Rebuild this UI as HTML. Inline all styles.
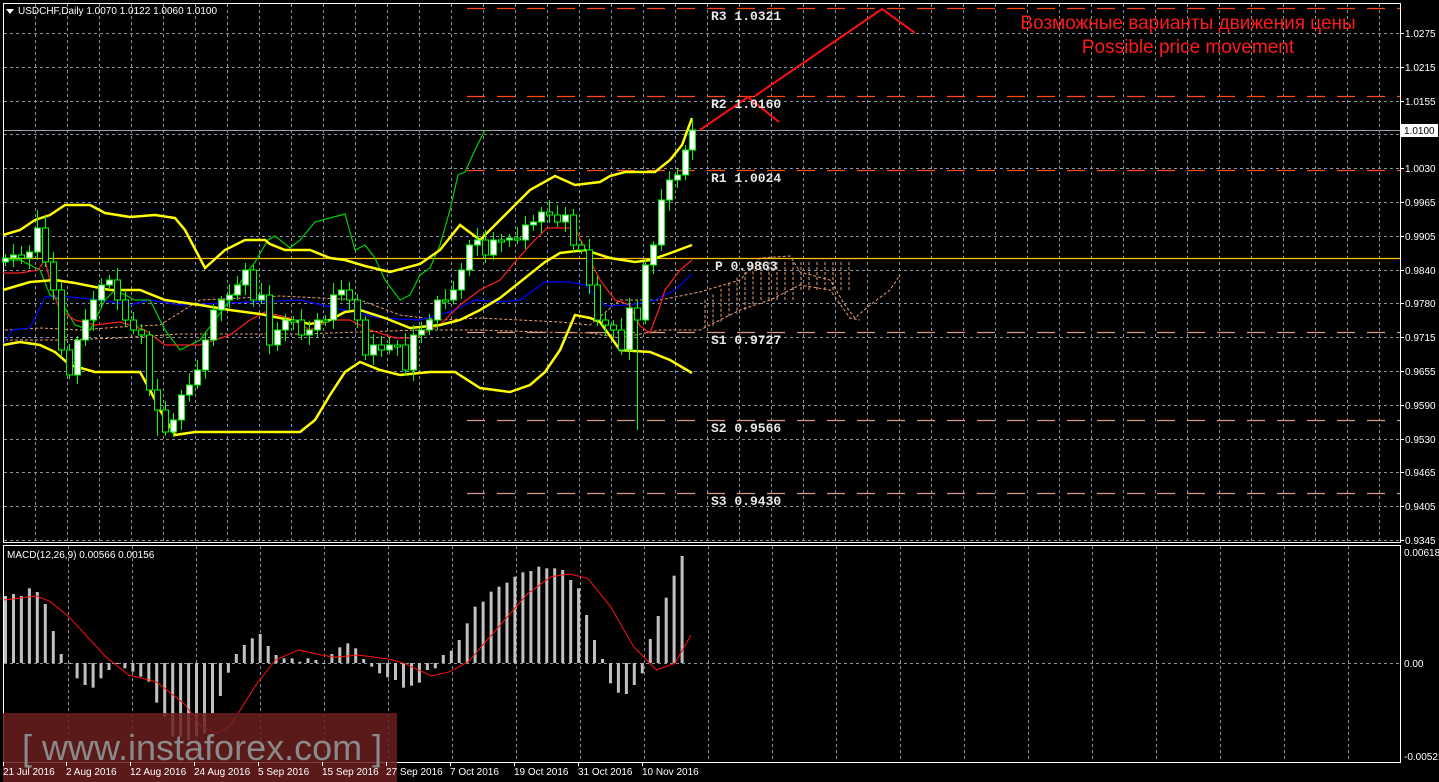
<!DOCTYPE html>
<html><head><meta charset="utf-8"><style>
html,body{margin:0;padding:0;background:#000;width:1439px;height:782px;overflow:hidden}
svg{display:block}
text{font-family:"Liberation Sans","DejaVu Sans",sans-serif}
</style></head><body>
<svg id="s" width="1439" height="782" xmlns="http://www.w3.org/2000/svg">
<rect width="1439" height="782" fill="#000"/>
<g id="grid" stroke="#8794a0" stroke-dasharray="3,3" stroke-width="1"></g>
<rect x="3.5" y="3.5" width="1397" height="539" fill="none" stroke="#fff"/>
<rect x="3.5" y="545.5" width="1397" height="217" fill="none" stroke="#fff"/>
<line x1="4" y1="130.5" x2="1400" y2="130.5" stroke="#9aa0a8"/>
<g stroke-width="1.3" stroke-dasharray="18,12">
<line x1="467" y1="8.5" x2="1400" y2="8.5" stroke="#ff4a10"/>
<line x1="467" y1="96.5" x2="1400" y2="96.5" stroke="#ff4a10"/>
<line x1="467" y1="170.5" x2="1400" y2="170.5" stroke="#ff4a10"/>
<line x1="467" y1="332.5" x2="1400" y2="332.5" stroke="#d89a88"/>
<line x1="467" y1="420.5" x2="1400" y2="420.5" stroke="#d89a88"/>
<line x1="467" y1="493.5" x2="1400" y2="493.5" stroke="#d89a88"/>
</g>
<line x1="4" y1="258.5" x2="1400" y2="258.5" stroke="#ffc000" stroke-width="1.3"/>
<g fill="none" stroke="#e8a070" stroke-dasharray="3,2" stroke-width="1">
<polyline points="5,330 40,328 80,330 120,327 160,325 200,300 240,298 280,296 320,298 360,300 400,315 440,320 480,318 520,320 560,322 590,325 620,300 660,300 700,292 740,280 760,258 790,256 800,272 830,280 845,305 855,318 870,305 890,290 900,275"/>
<polyline points="5,340 60,340 120,338 180,334 240,334 300,334 360,332 420,330 480,330 540,332 590,333 620,338 660,330 700,330 740,310 770,300 800,285 830,290 850,318 860,320"/>
</g>
<g id="hatch" stroke="#e8a070" stroke-dasharray="3,2" stroke-width="1"></g>
<polyline fill="none" stroke="#0000ff" stroke-width="1.2" points="3,345 12,330 30,328 45,297 60,296 100,300 130,305 150,300 180,305 300,300 380,318 420,320 450,312 475,300 500,302 520,300 545,282 570,282 585,285 605,306 630,305 655,300 675,290 692,274"/>
<polyline fill="none" stroke="#00d000" stroke-width="1.2" points="3,260 20,260 40,270 50,295 60,300 75,325 90,330 105,300 115,290 135,300 150,300 165,330 180,350 200,340 215,320 230,300 245,275 255,262 268,240 275,236 290,248 300,240 315,222 330,218 345,214 355,250 365,245 375,258 385,280 400,300 410,295 420,275 430,268 440,245 450,210 458,175 465,172 475,150 485,130"/>
<polyline fill="none" stroke="#ff2020" stroke-width="1.2" points="3,273 20,273 38,270 45,260 52,290 60,310 75,320 95,325 120,322 145,330 165,345 200,345 230,335 250,320 265,312 290,318 310,330 330,320 350,320 370,330 395,338 415,338 440,325 460,305 480,290 500,280 515,262 530,245 547,228 575,228 590,260 600,280 615,300 630,305 640,326 650,333 660,306 665,290 680,270 692,260"/>
<g fill="none" stroke="#ffff00" stroke-width="2.5">
<polyline points="3,235 20,230 35,220 50,215 65,205 90,205 105,213 130,217 155,215 175,218 185,230 205,268 225,250 245,240 265,240 270,244 285,250 310,250 330,258 345,260 365,266 390,272 420,264 440,250 460,225 480,240 510,210 530,190 555,176 575,185 600,182 610,176 625,172 655,172 670,160 682,145 692,118"/>
<polyline points="3,290 30,282 55,280 75,283 110,290 140,290 165,300 200,305 230,310 260,314 290,320 310,324 330,320 345,312 360,310 385,318 410,328 440,325 460,320 480,310 500,298 525,278 545,262 560,253 585,250 610,258 635,262 650,260 665,255 692,245"/>
<polyline points="3,345 20,342 40,345 55,352 70,365 95,372 140,372 150,390 160,410 175,435 195,432 250,432 300,432 315,420 330,395 345,372 360,362 380,370 400,375 430,372 455,372 480,388 510,392 530,385 545,372 560,350 575,315 590,318 600,322 620,350 650,352 670,360 692,373"/>
</g>
<g id="candles"></g>
<g stroke="#ff1010" stroke-width="2" fill="none">
<polyline points="700,130 748,97 779,122"/>
<polyline points="755,96 882,9 915,33"/>
</g>
<g fill="#e8e8e8" font-size="13" font-weight="bold">
<text x="711" y="20" style="font-family:'Liberation Mono',monospace">R3 1.0321</text>
<text x="711" y="108" style="font-family:'Liberation Mono',monospace">R2 1.0160</text>
<text x="711" y="182" style="font-family:'Liberation Mono',monospace">R1 1.0024</text>
<text x="715" y="270" style="font-family:'Liberation Mono',monospace">P 0.9863</text>
<text x="711" y="344" style="font-family:'Liberation Mono',monospace">S1 0.9727</text>
<text x="711" y="432" style="font-family:'Liberation Mono',monospace">S2 0.9566</text>
<text x="711" y="505" style="font-family:'Liberation Mono',monospace">S3 0.9430</text>
</g>
<text x="1188" y="29" fill="#ff1a1a" font-size="19" text-anchor="middle">Возможные варианты движения цены</text>
<text x="1188" y="53" fill="#ff1a1a" font-size="19" text-anchor="middle">Possible price movement</text>
<path d="M6,9 L14,9 L10,14 Z" fill="#fff"/>
<text x="18" y="14" fill="#fff" font-size="10">USDCHF,Daily  1.0070 1.0122 1.0060 1.0100</text>
<g id="axis" fill="#fff" font-size="10"></g>
<rect x="1400" y="124" width="38" height="13" fill="#fff"/>
<text x="1404" y="134" fill="#000" font-size="10">1.0100</text>
<line x1="4" y1="663.5" x2="1400" y2="663.5" stroke="#8794a0" stroke-dasharray="3,3"/>
<g id="macd" fill="#c0c0c0"></g>
<polyline id="sig" fill="none" stroke="#ff1010" stroke-width="1"/>
<text x="7" y="558" fill="#fff" font-size="10">MACD(12,26,9) 0.00566 0.00156</text>
<text x="1404" y="556" fill="#fff" font-size="10">0.00618</text>
<text x="1404" y="667" fill="#fff" font-size="10">0.00</text>
<text x="1404" y="760" fill="#fff" font-size="10">-0.00521</text>
<rect x="3" y="713" width="394" height="69" fill="#6a1e1e" fill-opacity="0.85"/>
<text x="22" y="760" fill="#8a8a8a" font-size="36">[ www.instaforex.com ]</text>
<g id="dates" fill="#fff" font-size="10"></g>
</svg>
<script>
(function(){
var NS="http://www.w3.org/2000/svg";
function el(p,t,a,txt){var e=document.createElementNS(NS,t);for(var k in a)e.setAttribute(k,a[k]);if(txt)e.textContent=txt;document.getElementById(p).appendChild(e);return e;}
for(var x=35;x<1400;x+=32){el('grid','line',{x1:x+.5,y1:4,x2:x+.5,y2:542});}
for(var x=68;x<1400;x+=64){el('grid','line',{x1:x+.5,y1:546,x2:x+.5,y2:762});}
var labs=["1.0275","1.0215","1.0155","1.0090","1.0030","0.9965","0.9905","0.9840","0.9780","0.9715","0.9655","0.9590","0.9530","0.9465","0.9405","0.9345"];
for(var i=0;i<16;i++){var y=Math.round(33+33.8*i);el('grid','line',{x1:4,y1:y+.5,x2:1400,y2:y+.5});
 el('axis','line',{x1:1400,y1:y+.5,x2:1404,y2:y+.5,stroke:'#fff'});
 if(i!=3)el('axis','text',{x:1405,y:y+4},labs[i]);}
for(var x=705;x<850;x+=8){var t1=x<760?300-(x-705)*0.7:262,b1=x<760?330-(x-705)*0.5:(x<800?300:292);el('hatch','line',{x1:x,y1:t1,x2:x,y2:b1});}
var c=[258,255,258,252,228,262,290,350,375,340,320,300,285,280,300,320,330,335,390,410,432,420,395,385,370,340,310,300,295,285,270,300,295,345,330,320,320,335,330,320,320,295,290,300,320,355,345,350,345,345,370,335,330,320,300,300,290,270,245,240,255,240,240,238,240,225,222,212,215,222,215,245,250,285,320,325,330,350,308,320,265,245,200,180,175,150,130];
var prev=262;
for(var i=0;i<c.length;i++){var x=5+8*i;if(i==86)x=692;var o=prev,cl=c[i];var tp=Math.min(o,cl),bt=Math.max(o,cl);
 if(bt-tp<2){bt=tp+2;}
 var hi=tp-4-((i*7)%9),lo=bt+4+((i*5)%8);if(i==79)lo=430;if(i==4)hi=210;if(i==19||i==20)lo=436;
 el('candles','line',{x1:x+.5,y1:hi,x2:x+.5,y2:lo,stroke:'#00ff00'});
 el('candles','rect',{x:x-2.5,y:tp,width:6,height:bt-tp,fill:cl<o?'#fff':'#000',stroke:'#00ff00','stroke-width':1});
 prev=cl;}
var m=[168,162,168,145,156,192,273,342,368,415,435,443,415,390,372,385,395,410,425,488,530,590,590,600,590,580,520,468,398,342,315,295,282,318,345,355,355,365,355,360,372,342,322,310,325,357,380,400,412,420,443,437,428,390,385,345,332,300,250,200,185,155,140,128,110,97,93,80,85,85,90,120,145,225,300,357,430,458,462,435,400,297,228,173,107,48];
for(var i=0;i<m.length;i++){var x=4+7.96*i,y=m[i]/3+540;var t2=Math.min(y,663),h=Math.abs(y-663);if(h<1)h=1;el('macd','rect',{x:x.toFixed(1),y:t2,width:3,height:h});}
var sp=[[8,180],[80,168],[110,185],[150,230],[230,350],[280,405],[340,425],[400,490],[440,560],[470,580],[500,560],[560,430],[600,360],[650,330],[700,345],[730,352],[780,345],[850,358],[880,370],[940,408],[980,395],[1020,365],[1080,270],[1150,160],[1200,110],[1240,102],[1280,115],[1330,200],[1380,320],[1430,390],[1470,370],[1505,285]];
document.getElementById('sig').setAttribute('points',sp.map(function(p){return (p[0]/2.178).toFixed(1)+','+(p[1]/3+540).toFixed(1)}).join(' '));
var d=[["21 Jul 2016",3],["2 Aug 2016",66],["12 Aug 2016",130],["24 Aug 2016",194],["5 Sep 2016",258],["15 Sep 2016",322],["27 Sep 2016",386],["7 Oct 2016",450],["19 Oct 2016",514],["31 Oct 2016",578],["10 Nov 2016",642]];
d.forEach(function(a){el('dates','text',{x:a[1],y:775},a[0]);el('dates','line',{x1:a[1]+.5,y1:762,x2:a[1]+.5,y2:766,stroke:'#fff'});});
})();
</script>
</body></html>
